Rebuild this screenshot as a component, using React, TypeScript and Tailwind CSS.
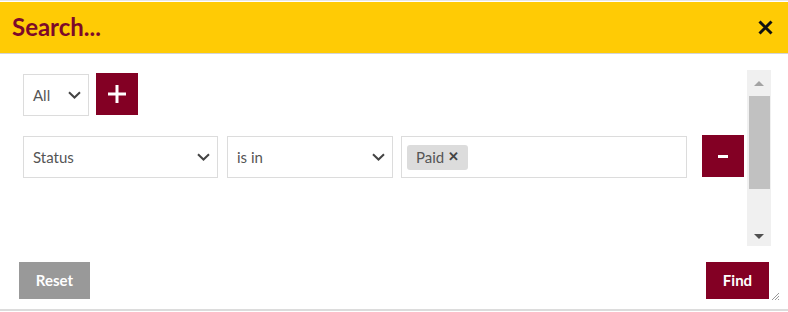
import React from "react";

function Chevron({ className = "" }: { className?: string }) {
  return (
    <svg width="13" height="8" viewBox="0 0 13 8" className={className}>
      <path d="M1 1.2 L6.5 6.5 L12 1.2" fill="none" stroke="#444" strokeWidth="2" />
    </svg>
  );
}

function Select({ label, width }: { label: string; width: string }) {
  return (
    <div className={`${width} h-[42px] border border-[#dcdcdc] bg-white flex items-center justify-between pl-[9px] pr-[7px] text-[15px] text-[#555]`}>
      <span>{label}</span>
      <Chevron />
    </div>
  );
}

export default function App() {
  return (
    <div className="w-[788px] h-[312px] bg-white relative overflow-hidden" style={{ fontFamily: "Lato, 'Open Sans', sans-serif" }}>
      <div className="h-[2px] bg-white border-t border-[#e6e6e6]" />
      <div className="h-[52px] bg-[#ffcb05] border-b border-[#d4d4d4] flex items-center justify-between pl-3 pr-[15px]">
        <h1 className="text-[24px] font-bold text-[#7d0a2a] leading-none -mt-[2px]">Search...</h1>
        <svg width="15" height="15" viewBox="0 0 15 15">
          <path d="M1.5 1.5 L13.5 13.5 M13.5 1.5 L1.5 13.5" stroke="#111" strokeWidth="3" />
        </svg>
      </div>

      <div className="flex mt-[16px] h-[176px] pr-[17px]">
        <div className="flex-1 pl-[23px] pt-[3px] pr-[3px]">
          <div className="flex items-start gap-[7px]">
            <div className="mt-[1px]">
              <Select label="All" width="w-[66px]" />
            </div>
            <button className="w-[42px] h-[42px] bg-[#830024] flex items-center justify-center">
              <svg width="20" height="20" viewBox="0 0 20 20">
                <path d="M10 1 V19 M1 10 H19" stroke="#fff" strokeWidth="3" />
              </svg>
            </button>
          </div>

          <div className="flex items-start mt-[19px]">
            <div className="mt-[1px]">
              <Select label="Status" width="w-[195px]" />
            </div>
            <div className="mt-[1px] ml-[9px]">
              <Select label="is in" width="w-[166px]" />
            </div>
            <div className="mt-[1px] ml-[8px] w-[286px] h-[42px] border border-[#dcdcdc] flex items-center pl-[5px]">
              <span className="h-[25px] px-[9px] rounded-[3px] bg-[#dcdcdc] text-[15px] text-[#555] flex items-center gap-[4px]">
                Paid
                <span className="font-bold text-[#444] text-[13px]">✕</span>
              </span>
            </div>
            <button className="ml-[15px] w-[42px] h-[42px] bg-[#830024] flex items-center justify-center">
              <span className="w-[10px] h-[3px] bg-white" />
            </button>
          </div>
        </div>

        <div className="w-[24px] h-full bg-[#f0f0f0] flex flex-col items-center">
          <div className="h-[26px] flex items-center justify-center">
            <span className="w-0 h-0 border-l-[5px] border-r-[5px] border-b-[5px] border-l-transparent border-r-transparent border-b-[#a3a3a3]" />
          </div>
          <div className="w-[21px] h-[93px] bg-[#c1c1c1]" />
          <div className="flex-1" />
          <div className="h-[20px] flex items-center justify-center">
            <span className="w-0 h-0 border-l-[5px] border-r-[5px] border-t-[5px] border-l-transparent border-r-transparent border-t-[#505050]" />
          </div>
        </div>
      </div>

      <div className="flex justify-between items-center mt-[16px] pl-[19px] pr-[19px]">
        <button className="w-[71px] h-[37px] bg-[#999999] text-white font-bold text-[15px]">Reset</button>
        <button className="w-[63px] h-[37px] bg-[#830024] text-white font-bold text-[15px]">Find</button>
      </div>

      <svg width="9" height="9" viewBox="0 0 9 9" className="absolute right-[8px] top-[292px]">
        <path d="M8 1 L1 8 M8 4 L4 8 M8 7 L7 8" stroke="#999" strokeWidth="1" />
      </svg>
      <div className="absolute left-0 right-0 bottom-[1px] h-[2px] bg-[#dcdcdc]" />
    </div>
  );
}
